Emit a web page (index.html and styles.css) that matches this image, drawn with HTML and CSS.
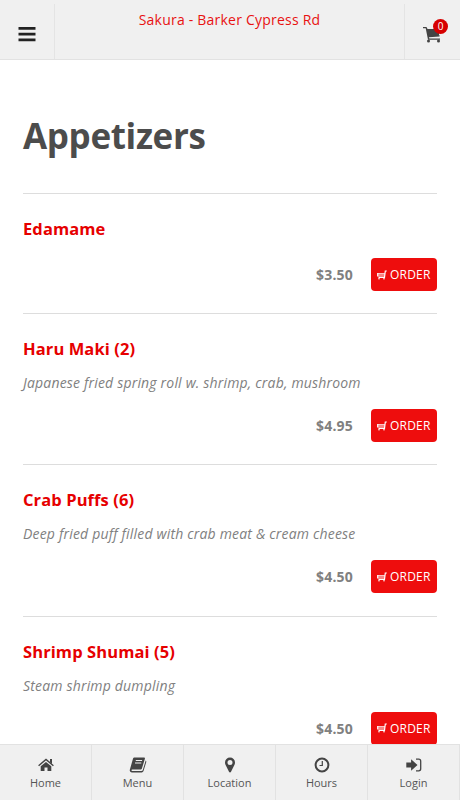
FILE: index.html
```html
<!DOCTYPE html>
<html lang="en">
<head>
<meta charset="utf-8">
<title>Sakura - Barker Cypress Rd</title>
<link rel="stylesheet" href="styles.css">
</head>
<body>
<svg class="defs" aria-hidden="true">
  <symbol id="cart" viewBox="0 0 18 17">
    <path d="M0 1h3.500l1.300 2.500L16 9.200l.8.300-.3.900L6 11.200l.3 1.300H17v1.200H5L2.700 2.200H0z"/>
    <path d="M4 3h12v6L5.500 10z"/>
    <circle cx="5.500" cy="15.100" r="1.500"/><circle cx="15.500" cy="15.100" r="1.500"/>
  </symbol>
  <symbol id="cart-small" viewBox="0 0 10 10">
    <path d="M9.800 1H8.300L7.500 7.500H1.500M.7 3V6H7.500M.7 3.800H7.800" fill="none" stroke="currentColor" stroke-width="1.200"/>
    <circle cx="2" cy="8.700" r=".8"/><circle cx="7" cy="8.700" r=".8"/>
  </symbol>
</svg>
<div class="screen">
  <header class="top">
    <a class="top-menu"><svg width="18" height="16" viewBox="0 0 18 16"><path d="M.5 1h17v2.800H.5zM.5 6.800h17v2.800H.5zM.5 12.400h17v2.800H.5z"/></svg></a>
    <div class="top-title">Sakura - Barker Cypress Rd</div>
    <a class="top-cart"><svg width="18" height="17"><use href="#cart"/></svg><span class="badge">0</span></a>
  </header>
  <main class="content">
    <h1>Appetizers</h1>
    <section class="item">
      <h2>Edamame</h2>
      <div class="buy"><span class="price">$3.50</span><a class="order"><svg width="10" height="10"><use href="#cart-small"/></svg>ORDER</a></div>
    </section>
    <section class="item">
      <h2>Haru Maki (2)</h2>
      <p>Japanese fried spring roll w. shrimp, crab, mushroom</p>
      <div class="buy"><span class="price">$4.95</span><a class="order"><svg width="10" height="10"><use href="#cart-small"/></svg>ORDER</a></div>
    </section>
    <section class="item">
      <h2>Crab Puffs (6)</h2>
      <p>Deep fried puff filled with crab meat &amp; cream cheese</p>
      <div class="buy"><span class="price">$4.50</span><a class="order"><svg width="10" height="10"><use href="#cart-small"/></svg>ORDER</a></div>
    </section>
    <section class="item">
      <h2>Shrimp Shumai (5)</h2>
      <p>Steam shrimp dumpling</p>
      <div class="buy"><span class="price">$4.50</span><a class="order"><svg width="10" height="10"><use href="#cart-small"/></svg>ORDER</a></div>
    </section>
  </main>
  <nav class="tabs">
    <a><svg width="16" height="16" viewBox="0 0 16 16"><path d="M8 5 13.300 9.300V14H9.500v-3.600h-3V14H2.700V9.300z"/><path d="M.6 8.700 8 2.500l7.400 6.200" fill="none" stroke="currentColor" stroke-width="1.400"/><path d="M12 2h2v5l-2-1.700z"/></svg>Home</a>
    <a><svg width="18" height="16" viewBox="0 0 18 16"><path d="M5.400.5h9.500c.8 0 1.200.6 1 1.300l-3 9.700c-.2.700-.8 1.100-1.500 1.100H3.200c-1 0-1 1.400.1 1.400h9.200c.6 0 1-.3 1.200-.8L16.700 3.600c.6.400.7.900.5 1.600l-2.700 8.900c-.3.800-1 1.300-1.800 1.300H3c-1.700 0-2.700-1.300-2.100-3L3.900 2C4.200 1 4.600.5 5.400.5z"/><path d="M6.800 3.500h6.300M6 6h6.300" stroke="#f0f0f0" stroke-width="1"/></svg>Menu</a>
    <a><svg width="12" height="16" viewBox="0 0 12 16"><path fill-rule="evenodd" d="M6 .5a5 5 0 0 1 5 5c0 1-.2 1.600-.5 2.200L7 14.800c-.4.900-1.600.9-2 0L1.500 7.700C1.200 7.100 1 6.500 1 5.500a5 5 0 0 1 5-5zm0 2.600a2.500 2.500 0 1 0 0 5 2.500 2.500 0 0 0 0-5z"/></svg>Location</a>
    <a><svg width="16" height="16" viewBox="0 0 16 16"><circle cx="8" cy="8" r="6.400" fill="none" stroke="currentColor" stroke-width="2"/><path d="M8.300 4v4.500H5.500" fill="none" stroke="currentColor" stroke-width="1.200"/></svg>Hours</a>
    <a><svg width="16" height="16" viewBox="0 0 16 16"><path d="M.3 5.400h4.800V2.300L11.500 8l-6.400 5.700v-3.100H.3z"/><path d="M10 2.200h2.700c1.300 0 2 .8 2 2v7.600c0 1.200-.7 2-2 2H10" fill="none" stroke="currentColor" stroke-width="1.300"/></svg>Login</a>
  </nav>
</div>
</body>
</html>
```
FILE: styles.css
```css
* { box-sizing: border-box; }
body {
  margin: 0;
  font-family: "Open Sans", sans-serif;
  color: #777;
  background: #fff;
}
svg { fill: currentColor; display: block; }
.defs { display: none; }
.screen {
  height: 800px;
  display: flex;
  flex-direction: column;
  overflow: hidden;
}
.top {
  flex: none;
  height: 60px;
  display: grid;
  grid-template-columns: 55px 1fr 56px;
  background: #f0f0f0;
  border-bottom: 1px solid #e2e2e2;
  color: #444;
}
.top-menu, .top-cart {
  display: flex;
  align-items: center;
  justify-content: center;
  padding-top: 9px;
  background: linear-gradient(#e4e4e4, #e4e4e4) right 4px / 1px 100% no-repeat;
}
.top-menu { color: #222; padding-right: 1px; }
.top-cart {
  position: relative;
  background-position: left 4px;
}
.top-title {
  padding-top: 10px;
  text-align: center;
  font-size: 14px;
  letter-spacing: 0.22px;
  line-height: 20px;
  color: #e81212;
}
.badge {
  position: absolute;
  top: 19px;
  left: 29px;
  width: 15px;
  height: 15px;
  border-radius: 50%;
  background: #d60000;
  color: #fff;
  font-size: 10px;
  line-height: 15px;
  text-align: center;
}
.content {
  flex: 1;
  min-height: 0;
  overflow: hidden;
  padding: 51px 23px 0;
}
h1 {
  margin: 0 0 32px;
  font-size: 35px;
  letter-spacing: -0.35px;
  line-height: 50px;
  color: #4c4c4c;
}
.item {
  height: 151.3px;
  border-top: 1px solid #ddd;
  padding-top: 23px;
}
.item:nth-of-type(1) { height: 120.2px; }
h2 {
  margin: 0;
  font-size: 16.5px;
  letter-spacing: 0.1px;
  line-height: 24px;
  color: #e60000;
}
p {
  margin: 10px 0 -2px;
  font-size: 14px;
  letter-spacing: 0.18px;
  line-height: 24px;
  font-style: italic;
  color: #808080;
}
.buy {
  display: flex;
  justify-content: flex-end;
  align-items: center;
  gap: 18px;
  margin-top: 17px;
}
p + .buy { margin-top: 16px; }
.price { font-size: 14px; font-weight: 700; letter-spacing: 0.2px; color: #808080; }
.order {
  width: 66px;
  height: 33px;
  display: flex;
  align-items: center;
  gap: 3px;
  padding-left: 6px;
  border-radius: 4px;
  background: #ee0d0d;
  color: #fff;
  font-size: 12px;
  letter-spacing: 0.2px;
}
.tabs {
  flex: none;
  height: 56px;
  display: grid;
  grid-template-columns: repeat(5, 1fr);
  background: #f0f0f0;
  border-top: 1px solid #e2e2e2;
}
.tabs a {
  display: flex;
  flex-direction: column;
  align-items: center;
  gap: 2px;
  padding-top: 12px;
  border-right: 1px solid #e2e2e2;
  font-size: 11px;
  line-height: 15px;
  color: #555;
}
.tabs svg { color: #444; }
```
